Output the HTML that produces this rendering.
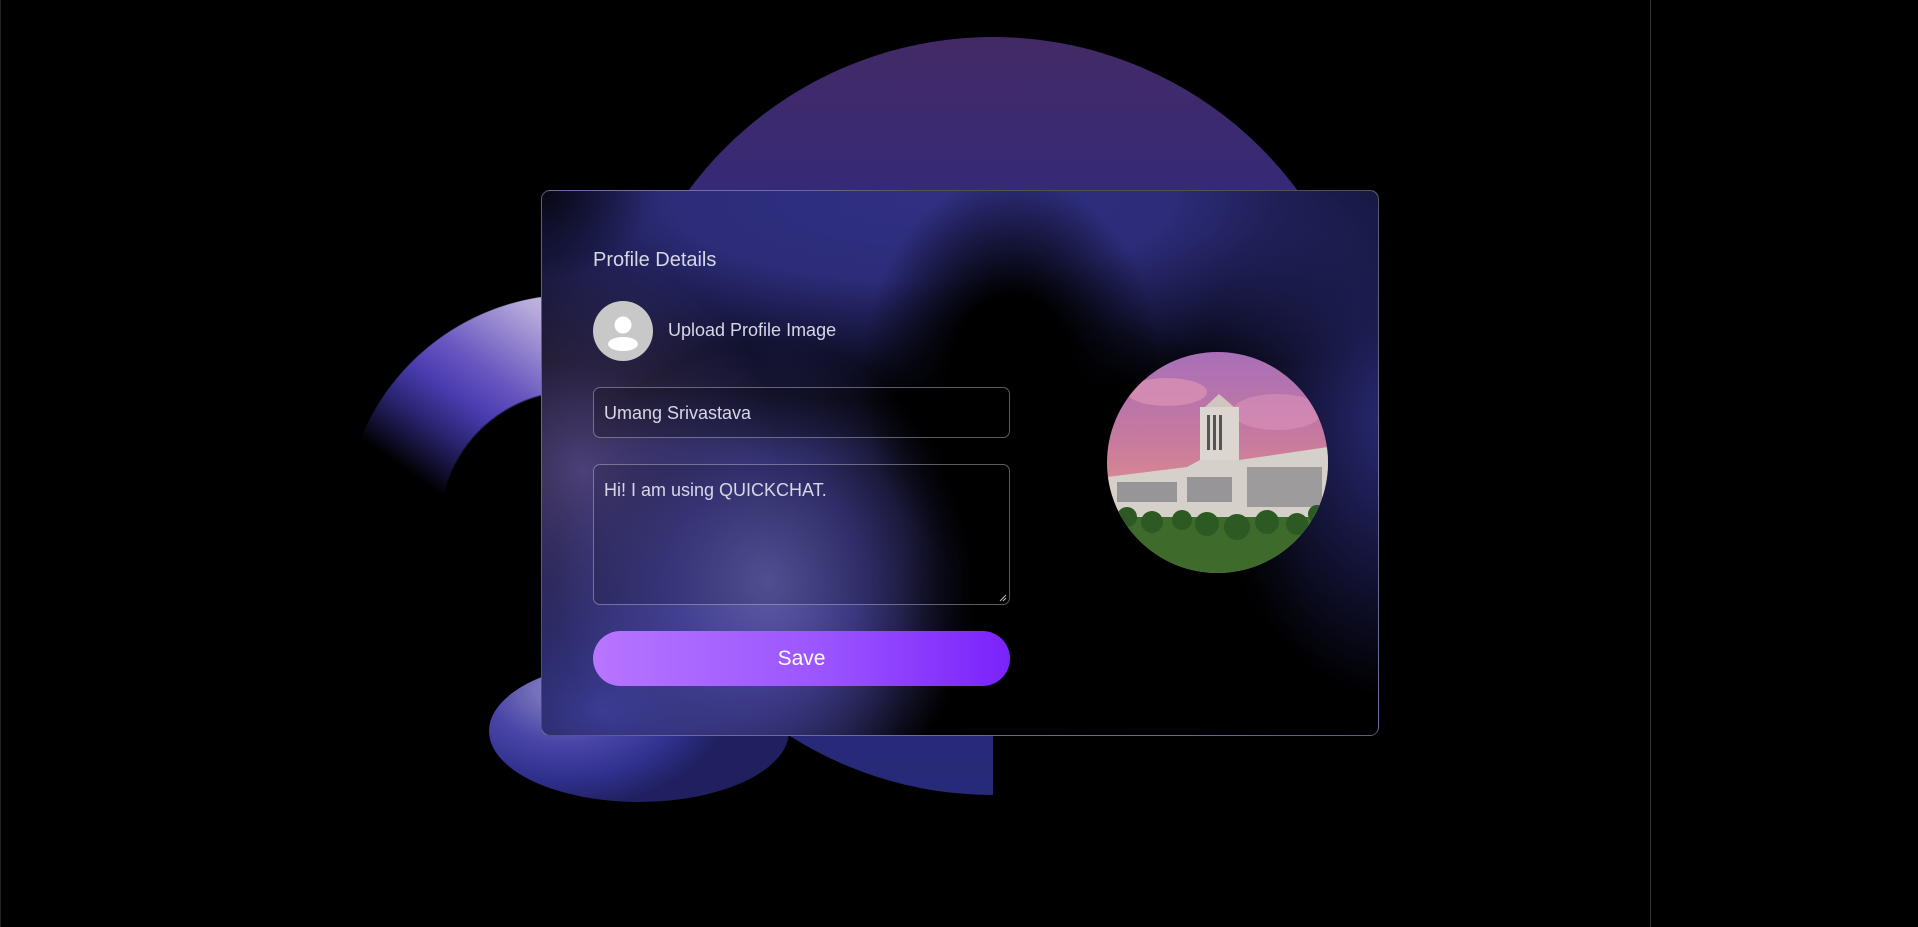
<!DOCTYPE html>
<html><head><meta charset="utf-8"><style>
*{margin:0;padding:0;box-sizing:border-box}
html,body{width:1918px;height:927px;background:#000;overflow:hidden;font-family:"Liberation Sans",sans-serif;position:relative}
.abs{position:absolute}
.big{left:614px;top:37px;width:758px;height:758px;border-radius:50%;background:linear-gradient(180deg,#432a66 0%,#33297a 25%,#2b2c7e 60%,#272a78 100%);clip-path:polygon(0 0,100% 0,100% 55%,50% 55%,50% 100%,0 100%)}
.ring{left:343px;top:294px;width:464px;height:464px;border-radius:50%;
background:linear-gradient(35deg,#000 42%,#2a2470 50%,#4a3cb0 56%,#6a58c0 62%,#b9acdc 74%,#cfc5ea 80%);
-webkit-mask:radial-gradient(circle,transparent 134px,#000 136px,#000 231px,transparent 232px);
mask:radial-gradient(circle,transparent 134px,#000 136px,#000 231px,transparent 232px)}
.blob{left:489px;top:660px;width:300px;height:142px;border-radius:50%;background:radial-gradient(ellipse 170px 120px at 25% 20%,#8f8bc4 0%,#4a46a8 45%,#30308e 75%,#202060 100%)}
.card{left:541px;top:190px;width:838px;height:546px;border:1px solid rgba(200,200,220,.4);border-radius:9px;overflow:hidden;
background:
radial-gradient(ellipse 110px 90px at 0 0,rgba(5,5,15,.9),rgba(5,5,15,0)),
radial-gradient(ellipse 150px 200px at 470px 185px,#000 40%,rgba(0,0,0,0) 100%),
radial-gradient(ellipse 200px 300px at 560px 420px,#000 30%,rgba(0,0,0,0) 100%),
radial-gradient(ellipse 210px 240px at 225px 390px,rgba(95,93,170,1),rgba(75,72,165,.75) 45%,rgba(50,50,140,0) 100%),
radial-gradient(ellipse 300px 230px at 60px 520px,rgba(62,62,155,.95),rgba(60,60,150,0)),
radial-gradient(ellipse 200px 220px at 40px 280px,rgba(95,80,150,.8),rgba(95,80,150,0)),
radial-gradient(ellipse 620px 200px at 380px 10px,#302f82,#2c2c7a 40%,rgba(44,44,122,0)),
radial-gradient(ellipse 200px 280px at 860px 230px,#2a2b78,rgba(40,41,111,0)),
#000}
.t{color:#d6d6e6}
.h{left:51px;top:58px;font-size:20px}
.av{left:51px;top:110px;width:60px;height:60px;border-radius:50%;background:#c8c8c8}
.up{left:126px;top:129px;font-size:18px}
.inp{left:51px;top:196px;width:417px;height:51px;border:1px solid rgba(200,200,220,.45);border-radius:7px;background:rgba(0,0,0,.2)}
.inp span{position:absolute;left:10px;top:15px;font-size:18px}
.ta{left:51px;top:273px;width:417px;height:141px;border:1px solid rgba(200,200,220,.45);border-radius:7px;background:rgba(0,0,0,.15)}
.ta span{position:absolute;left:10px;top:15px;font-size:18px}
.btn{left:51px;top:440px;width:417px;height:55px;border-radius:28px;background:linear-gradient(90deg,#b775ff,#9b55ff 55%,#7a22fb);color:#fff;font-size:21px;text-align:center;line-height:55px}
.photo{left:565px;top:161px;width:221px;height:221px;border-radius:50%;overflow:hidden}
</style></head><body>
<div class="abs" style="left:1650px;top:0;width:1px;height:927px;background:#333"></div>
<div class="abs" style="left:0;top:0;width:1px;height:927px;background:#222"></div>
<div class="abs big"></div>
<div class="abs ring"></div>
<div class="abs blob"></div>
<div class="abs card">
  <div class="abs t h">Profile Details</div>
  <div class="abs av"><svg width="60" height="60" viewBox="0 0 60 60"><circle cx="30" cy="24" r="8.5" fill="#fff"/><ellipse cx="30" cy="43" rx="15" ry="7" fill="#fff"/></svg></div>
  <div class="abs t up">Upload Profile Image</div>
  <div class="abs inp"><span class="t">Umang Srivastava</span></div>
  <div class="abs ta"><span class="t">Hi! I am using QUICKCHAT.</span>
    <svg class="abs" style="right:2px;bottom:2px" width="8" height="8"><path d="M1 7L7 1M4 7L7 4" stroke="#bbb" stroke-width="1"/></svg></div>
  <div class="abs btn">Save</div>
  <div class="abs photo"><svg width="221" height="221" viewBox="0 0 221 221">
    <defs><linearGradient id="s" x1="0" y1="0" x2="0" y2="1"><stop offset="0" stop-color="#a86fb8"/><stop offset=".4" stop-color="#c77a9e"/><stop offset=".6" stop-color="#d98892"/></linearGradient></defs>
    <rect width="221" height="221" fill="url(#s)"/>
    <ellipse cx="60" cy="40" rx="40" ry="14" fill="#e59ab5" opacity=".6"/>
    <ellipse cx="170" cy="60" rx="45" ry="18" fill="#e097bd" opacity=".5"/>
    <rect x="93" y="55" width="39" height="65" fill="#dcd5d0"/>
    <path d="M98 55L112 42L127 55Z" fill="#cfc6c0"/>
    <rect x="100" y="63" width="3" height="35" fill="#555"/><rect x="106" y="63" width="3" height="35" fill="#555"/><rect x="112" y="63" width="3" height="35" fill="#555"/>
    <path d="M0 125L80 115L93 108L132 108L221 95L221 180L0 180Z" fill="#d6d0ca"/>
    <g fill="#5a5a66"><rect x="10" y="130" width="60" height="20" opacity=".5"/><rect x="80" y="125" width="45" height="25" opacity=".5"/><rect x="140" y="115" width="75" height="40" opacity=".45"/></g>
    <rect x="0" y="165" width="221" height="56" fill="#3e6a2c"/>
    <g fill="#2c5a22"><circle cx="20" cy="165" r="10"/><circle cx="45" cy="170" r="11"/><circle cx="75" cy="168" r="10"/><circle cx="100" cy="172" r="12"/><circle cx="130" cy="175" r="13"/><circle cx="160" cy="170" r="12"/><circle cx="190" cy="172" r="11"/><circle cx="210" cy="162" r="9"/></g>
  </svg></div>
</div>
</body></html>
